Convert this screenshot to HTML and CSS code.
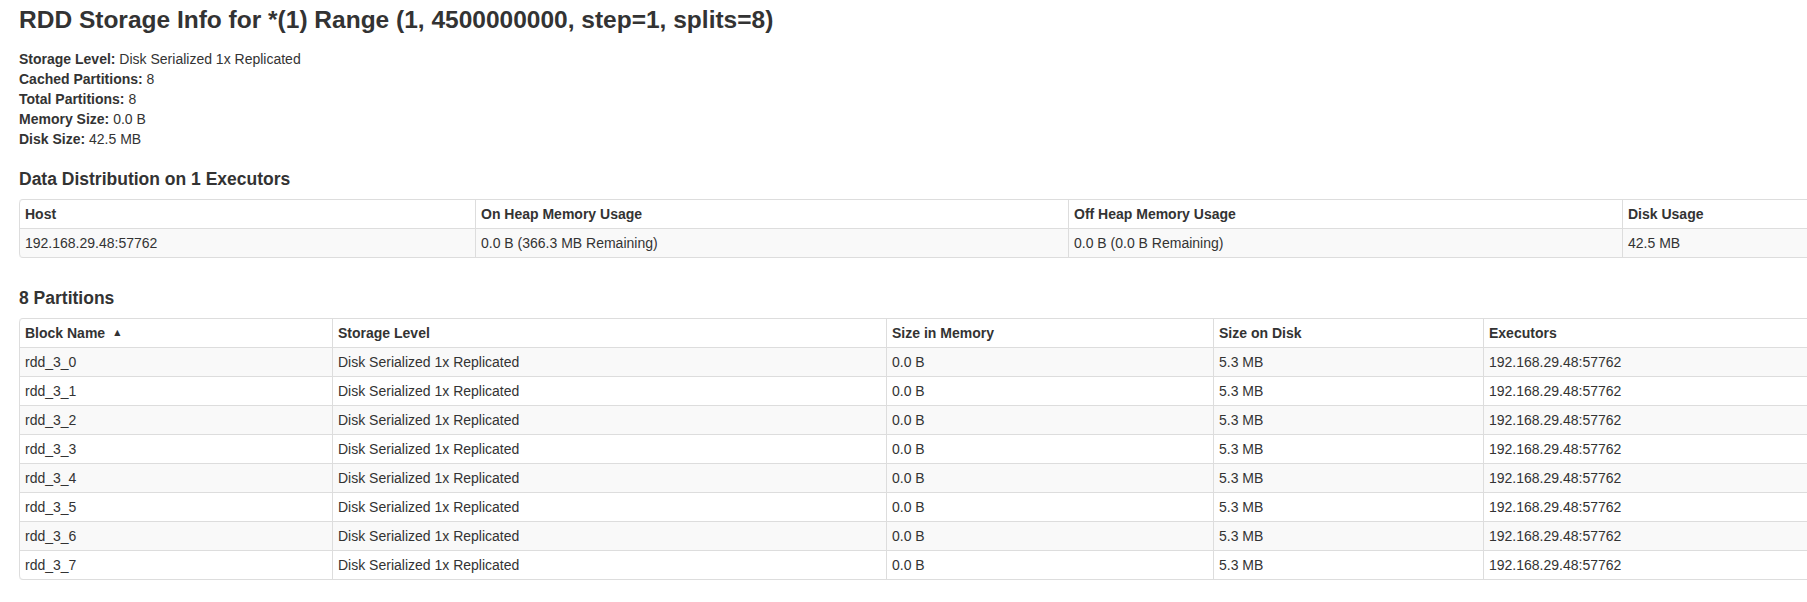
FILE: index.html
```html
<!DOCTYPE html>
<html>
<head>
<meta charset="utf-8">
<title>RDD Storage Info</title>
<link rel="stylesheet" href="styles.css">
</head>
<body>
<div class="page">
  <h3 class="page-title">RDD Storage Info for *(1) Range (1, 4500000000, step=1, splits=8)</h3>
  <ul class="info">
    <li><strong>Storage Level:</strong> Disk Serialized 1x Replicated</li>
    <li><strong>Cached Partitions:</strong> 8</li>
    <li><strong>Total Partitions:</strong> 8</li>
    <li><strong>Memory Size:</strong> 0.0 B</li>
    <li><strong>Disk Size:</strong> 42.5 MB</li>
  </ul>

  <h4 class="section-title">Data Distribution on 1 Executors</h4>
  <table class="grid grid-exec">
    <thead>
      <tr>
        <th class="c-host">Host</th>
        <th class="c-onheap">On Heap Memory Usage</th>
        <th class="c-offheap">Off Heap Memory Usage</th>
        <th>Disk Usage</th>
      </tr>
    </thead>
    <tbody>
      <tr>
        <td>192.168.29.48:57762</td>
        <td>0.0 B (366.3 MB Remaining)</td>
        <td>0.0 B (0.0 B Remaining)</td>
        <td>42.5 MB</td>
      </tr>
    </tbody>
  </table>

  <h4 class="section-title">8 Partitions</h4>
  <table class="grid grid-parts">
    <thead>
      <tr>
        <th class="c-block">Block Name<span class="sort">&#x25B2;</span></th>
        <th class="c-level">Storage Level</th>
        <th class="c-mem">Size in Memory</th>
        <th class="c-disk">Size on Disk</th>
        <th>Executors</th>
      </tr>
    </thead>
    <tbody>
      <tr><td>rdd_3_0</td><td>Disk Serialized 1x Replicated</td><td>0.0 B</td><td>5.3 MB</td><td>192.168.29.48:57762</td></tr>
      <tr><td>rdd_3_1</td><td>Disk Serialized 1x Replicated</td><td>0.0 B</td><td>5.3 MB</td><td>192.168.29.48:57762</td></tr>
      <tr><td>rdd_3_2</td><td>Disk Serialized 1x Replicated</td><td>0.0 B</td><td>5.3 MB</td><td>192.168.29.48:57762</td></tr>
      <tr><td>rdd_3_3</td><td>Disk Serialized 1x Replicated</td><td>0.0 B</td><td>5.3 MB</td><td>192.168.29.48:57762</td></tr>
      <tr><td>rdd_3_4</td><td>Disk Serialized 1x Replicated</td><td>0.0 B</td><td>5.3 MB</td><td>192.168.29.48:57762</td></tr>
      <tr><td>rdd_3_5</td><td>Disk Serialized 1x Replicated</td><td>0.0 B</td><td>5.3 MB</td><td>192.168.29.48:57762</td></tr>
      <tr><td>rdd_3_6</td><td>Disk Serialized 1x Replicated</td><td>0.0 B</td><td>5.3 MB</td><td>192.168.29.48:57762</td></tr>
      <tr><td>rdd_3_7</td><td>Disk Serialized 1x Replicated</td><td>0.0 B</td><td>5.3 MB</td><td>192.168.29.48:57762</td></tr>
    </tbody>
  </table>
</div>
</body>
</html>
```

FILE: styles.css
```css
* {
  box-sizing: border-box;
}

html,
body {
  margin: 0;
  padding: 0;
  overflow: hidden;
  background: #fff;
}

body {
  font-family: "Liberation Sans", Arial, "DejaVu Sans", sans-serif;
  font-size: 14px;
  line-height: 20px;
  color: #333;
}

.page {
  padding: 0 0 0 19px;
}

.page-title {
  margin: 0 0 9px;
  font-size: 24.5px;
  line-height: 40px;
  font-weight: bold;
  color: #333;
  white-space: nowrap;
}

.info {
  list-style: none;
  margin: 0 0 20px;
  padding: 0;
}

.info strong {
  font-weight: bold;
}

.section-title {
  margin: 0 0 10px;
  font-size: 17.5px;
  line-height: 20px;
  font-weight: bold;
  color: #333;
}

.grid {
  table-layout: fixed;
  width: 2100px;
  border: 1px solid #ddd;
  border-left: 0;
  border-collapse: separate;
  border-spacing: 0;
  border-radius: 4px;
}

.grid-exec {
  margin-bottom: 30px;
}

.grid th,
.grid td {
  padding: 4px 5px;
  line-height: 20px;
  text-align: left;
  vertical-align: top;
  border-left: 1px solid #ddd;
  border-top: 1px solid #ddd;
  white-space: nowrap;
  overflow: hidden;
}

.grid thead th {
  border-top: 0;
  font-weight: bold;
  background: #fff;
}

.grid tbody tr:nth-child(odd) td {
  background: #f9f9f9;
}

.grid thead tr:first-child th:first-child {
  border-top-left-radius: 4px;
}

.grid tbody tr:last-child td:first-child {
  border-bottom-left-radius: 4px;
}

.c-host { width: 456px; }
.c-onheap { width: 593px; }
.c-offheap { width: 554px; }

.c-block { width: 313px; }
.c-level { width: 554px; }
.c-mem { width: 327px; }
.c-disk { width: 270px; }

.sort {
  display: inline-block;
  margin-left: 9px;
  font-family: "DejaVu Sans", sans-serif;
  font-size: 8px;
  line-height: 20px;
  vertical-align: top;
}
```
